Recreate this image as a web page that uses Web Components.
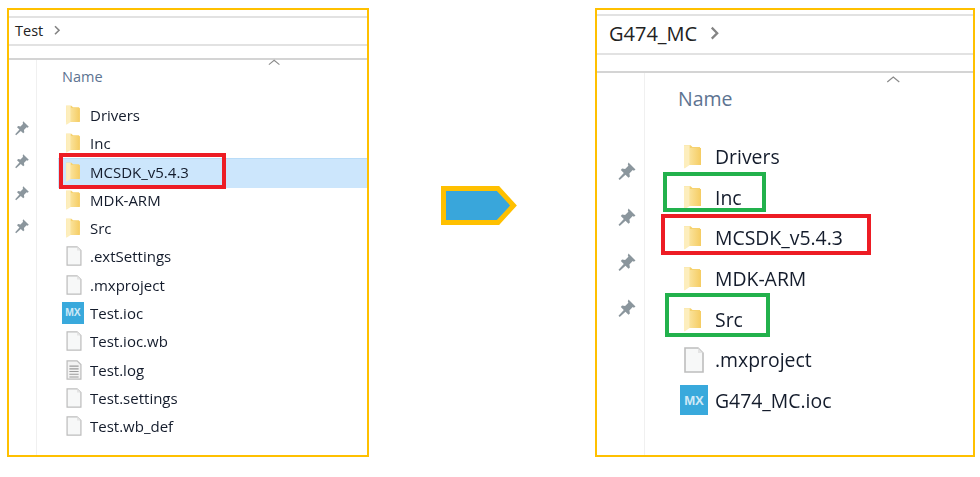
<!DOCTYPE html>
<html>
<head>
<meta charset="utf-8">
<title>Explorer folders</title>
<style>
  body { margin: 0; background: #fff; }
</style>
</head>
<body>
<compare-view>
  <explorer-panel slot="left" crumb="Test" class="small">
    <file-row kind="folder">Drivers</file-row>
    <file-row kind="folder">Inc</file-row>
    <file-row kind="folder" selected mark="red" mark-box="3,-5,167,36">MCSDK_v5.4.3</file-row>
    <file-row kind="folder">MDK-ARM</file-row>
    <file-row kind="folder">Src</file-row>
    <file-row kind="file">.extSettings</file-row>
    <file-row kind="file">.mxproject</file-row>
    <file-row kind="mx">Test.ioc</file-row>
    <file-row kind="file">Test.ioc.wb</file-row>
    <file-row kind="log">Test.log</file-row>
    <file-row kind="file">Test.settings</file-row>
    <file-row kind="file">Test.wb_def</file-row>
  </explorer-panel>
  <arrow-shape slot="arrow"></arrow-shape>
  <explorer-panel slot="right" crumb="G474_MC" class="large">
    <file-row kind="folder">Drivers</file-row>
    <file-row kind="folder" mark="green" mark-box="-8,-5,103,40">Inc</file-row>
    <file-row kind="folder" mark="red" mark-box="-10,-3,210,41">MCSDK_v5.4.3</file-row>
    <file-row kind="folder">MDK-ARM</file-row>
    <file-row kind="folder" mark="green" mark-box="-6,-6,105,44">Src</file-row>
    <file-row kind="file">.mxproject</file-row>
    <file-row kind="mx">G474_MC.ioc</file-row>
  </explorer-panel>
</compare-view>

<script>
// Custom Element 1: <compare-view>
class CompareView extends HTMLElement {
  constructor() {
    super();
    this.attachShadow({ mode: 'open' });
    this.shadowRoot.innerHTML = `
      <style>
        :host {
          display: flex;
          height: 477px;
          box-sizing: border-box;
          padding: 8px 4px 20px 7px;
          overflow: hidden;
          font-family: "Open Sans", "Noto Sans", sans-serif;
        }
        .arrow {
          display: flex;
          align-items: flex-start;
          padding: 178px 78px 0 72px;
        }
      </style>
      <slot name="left"></slot>
      <div class="arrow"><slot name="arrow"></slot></div>
      <slot name="right"></slot>
    `;
  }
}
customElements.define('compare-view', CompareView);

// Custom Element 2: <explorer-panel>
const PIN = `<svg viewBox="0 0 20 20" width="100%" height="100%">
  <path fill="#8b969d" d="M11.5 1.5l7 7-1.6 1.2-1.2-.6-3.3 3.3.5 3-1.4 1.3-3-3-5.8 5.3-1.2-1.2 5.3-5.8-3-3 1.3-1.4 3 .5 3.3-3.3-.6-1.2z"/>
</svg>`;

class ExplorerPanel extends HTMLElement {
  constructor() {
    super();
    this.attachShadow({ mode: 'open' });
    this.shadowRoot.innerHTML = `
      <style>
        :host {
          display: flex;
          flex-direction: column;
          box-sizing: border-box;
          height: 449px;
          border: 2px solid #ffc000;
          background: #fff;
          color: #1c2430;
        }
        :host(.small) {
          width: 362px;
          --top: 6px; --crumb: 24px; --crumb-up: 2px; --strip: 12px; --side: 22px;
          --crumb-size: 14.5px; --crumb-pad: 6px;
          --name-size: 14.5px; --name-h: 36px; --name-pad: 25px; --name-top: 8px;
          --caret-right: 87px; --caret-top: -1px; --list-pad: 5px; --list-left: 19px;
          --row: 28.27px; --pin: 16px; --pin-top: 59px; --pin-gap: 16.7px; --pin-left: 5px;
          --chev: 8px; --chev-gap: 10px;
        }
        :host(.large) {
          width: 380px;
          --top: 4px; --crumb: 34px; --crumb-up: 3px; --strip: 16px; --side: 27px;
          --crumb-size: 20px; --crumb-pad: 12px;
          --name-size: 19.5px; --name-h: 50px; --name-pad: 33px; --name-top: 14px;
          --caret-right: 71px; --caret-top: 3px; --list-pad: 13px; --list-left: 26px;
          --row: 40.7px; --pin: 20px; --pin-top: 88px; --pin-gap: 25.6px; --pin-left: 20px;
          --chev: 11px; --chev-gap: 12px;
        }
        .top { height: var(--top); flex: none; border-bottom: 2px solid #e2e2e2; }
        .crumb {
          height: var(--crumb);
          flex: none;
          display: flex;
          align-items: center;
          gap: var(--chev-gap);
          padding: 0 0 var(--crumb-up) var(--crumb-pad);
          font-size: var(--crumb-size);
          border-bottom: 2px solid #e2e2e2;
          color: #222;
        }
        .crumb svg { width: var(--chev); height: calc(var(--chev) * 1.3); }
        .strip { height: var(--strip); flex: none; border-bottom: 2px solid #d4d4d4; }
        .body { flex: 1; display: flex; min-height: 0; }
        .side {
          width: var(--side);
          flex: none;
          border-right: 1px solid #f0f0f0;
          display: flex;
          flex-direction: column;
          gap: var(--pin-gap);
          padding: var(--pin-top) 0 0 var(--pin-left);
          margin-right: calc(0px - var(--pin-left));
        }
        .pin { width: var(--pin); height: var(--pin); }
        .main { flex: 1; min-width: 0; padding-left: var(--pin-left); }
        .head {
          height: var(--name-h);
          display: flex;
          align-items: flex-start;
          padding-left: var(--name-pad);
          font-size: var(--name-size);
          color: #5d7391;
        }
        .head span { margin-top: var(--name-top); line-height: 1.2; }
        .head svg {
          width: calc(var(--name-size) * 0.85);
          height: 7px;
          margin: var(--caret-top) var(--caret-right) 0 auto;
        }
        .list { display: block; padding-top: var(--list-pad); margin-left: var(--list-left); }
      </style>
      <div class="top"></div>
      <div class="crumb">
        <span></span>
        <svg viewBox="0 0 8 10"><path d="M2 1l4 4-4 4" fill="none" stroke="#848484" stroke-width="1.6"/></svg>
      </div>
      <div class="strip"></div>
      <div class="body">
        <div class="side">
          <div class="pin">${PIN}</div>
          <div class="pin">${PIN}</div>
          <div class="pin">${PIN}</div>
          <div class="pin">${PIN}</div>
        </div>
        <div class="main">
          <div class="head">
            <span>Name</span>
            <svg viewBox="0 0 14 7"><path d="M1 6l6-5 6 5" fill="none" stroke="#8a8a8a" stroke-width="1.2"/></svg>
          </div>
          <div class="list"><slot></slot></div>
        </div>
      </div>
    `;
  }

  connectedCallback() {
    this.shadowRoot.querySelector('.crumb span').textContent = this.getAttribute('crumb');
  }
}
customElements.define('explorer-panel', ExplorerPanel);

// Custom Element 3: <file-row>
const ICONS = {
  folder: `<svg viewBox="0 0 18 26" width="100%" height="100%">
    <defs><linearGradient id="fold" x1="0" y1="0" x2="1" y2="0">
      <stop offset="0" stop-color="#fae29a"/><stop offset="1" stop-color="#f5cc62"/>
    </linearGradient></defs>
    <path fill="#f6d26f" d="M0 1h7l2 2h8v19H0z"/>
    <path fill="url(#fold)" d="M6 4h12v18H6z"/>
    <path fill="#fdeebd" d="M0 1h6v21L1 25.5H0z"/>
  </svg>`,
  file: `<svg viewBox="0 0 20 26" width="100%" height="100%">
    <path fill="#f7f8f8" stroke="#bdbdbd" stroke-width="1.6" d="M1 1h13l5 5v19H1z"/>
    <path fill="#e4e4e4" d="M14 1v5h5z"/>
  </svg>`,
  log: `<svg viewBox="0 0 20 26" width="100%" height="100%">
    <path fill="#f3f3f3" stroke="#bdbdbd" stroke-width="1.6" d="M1 1h13l5 5v19H1z"/>
    <path stroke="#9c9c9c" stroke-width="1.4" d="M4 8h12M4 11.5h12M4 15h12M4 18.5h12M4 22h12"/>
  </svg>`
};

class FileRow extends HTMLElement {
  constructor() {
    super();
    this.attachShadow({ mode: 'open' });
    this.shadowRoot.innerHTML = `
      <style>
        :host {
          display: block;
          position: relative;
          height: var(--row);
          font-size: var(--row-size, 15px);
        }
        :host-context(.small) {
          --row-size: 15px; --ic: 33px;
          --icon-w: 14px; --icon-h: 20px;
          --file-w: 16px; --file-h: 20px; --file-shift: 3px;
          --mx-w: 22px; --mx-h: 22px; --mx-shift: 1px;
        }
        :host-context(.large) {
          --row-size: 19.4px; --ic: 43px;
          --icon-w: 17px; --icon-h: 25px;
          --file-w: 20px; --file-h: 28px; --file-shift: 3px;
          --mx-w: 28px; --mx-h: 30px; --mx-shift: 3px;
        }
        .row {
          height: 100%;
          display: flex;
          align-items: center;
          position: relative;
          z-index: 1;
        }
        .ic {
          width: var(--ic);
          flex: none;
          display: flex;
          justify-content: center;
        }
        .ic > div { width: var(--icon-w); height: var(--icon-h); }
        .ic > div.doc {
          width: var(--file-w);
          height: var(--file-h);
          margin-left: var(--file-shift);
        }
        .mx {
          width: var(--mx-w);
          height: var(--mx-h);
          margin-left: var(--mx-shift);
          background: #39a9dc;
          color: #cfeaf7;
          font: bold calc(var(--mx-w) * 0.47)/1 "Liberation Sans", sans-serif;
          display: flex;
          align-items: center;
          justify-content: center;
        }
        .name { margin-left: 1px; white-space: nowrap; color: #141c2c; filter: blur(.25px); }
        .sel {
          position: absolute;
          left: 2px;
          right: 0;
          top: 0;
          bottom: -2px;
          background: #cce6fc;
          border-top: 1px solid #b9dcf8;
        }
        .mark {
          position: absolute;
          z-index: 2;
          box-sizing: border-box;
          border: 4px solid;
        }
      </style>
      <div class="bg"></div>
      <div class="row">
        <div class="ic"></div>
        <div class="name"><slot></slot></div>
      </div>
    `;
  }

  connectedCallback() {
    const root = this.shadowRoot;
    const kind = this.getAttribute('kind');
    root.querySelector('.ic').innerHTML = kind === 'mx'
      ? '<span class="mx">MX</span>'
      : `<div class="${kind === 'folder' ? '' : 'doc'}">${ICONS[kind]}</div>`;
    if (this.hasAttribute('selected')) {
      root.querySelector('.bg').className = 'sel';
    }
    const mark = this.getAttribute('mark');
    if (mark) {
      const [left, top, width, height] = this.getAttribute('mark-box').split(',');
      const box = document.createElement('div');
      box.className = 'mark';
      box.style.cssText = `left:${left}px;top:${top}px;width:${width}px;height:${height}px`;
      box.style.borderColor = mark === 'red' ? '#ed1c24' : '#22b14c';
      root.appendChild(box);
    }
  }
}
customElements.define('file-row', FileRow);

// Custom Element 4: <arrow-shape>
class ArrowShape extends HTMLElement {
  constructor() {
    super();
    this.attachShadow({ mode: 'open' });
    this.shadowRoot.innerHTML = `
      <style>
        :host { display: block; width: 76px; height: 39px; }
        svg { display: block; }
      </style>
      <svg viewBox="0 0 76 39" width="76" height="39">
        <path d="M2.5 2.5H57L72.5 19.5 57 36.5H2.5z" fill="#39a6db" stroke="#ffc000" stroke-width="5"/>
      </svg>
    `;
  }
}
customElements.define('arrow-shape', ArrowShape);
</script>
</body>
</html>
